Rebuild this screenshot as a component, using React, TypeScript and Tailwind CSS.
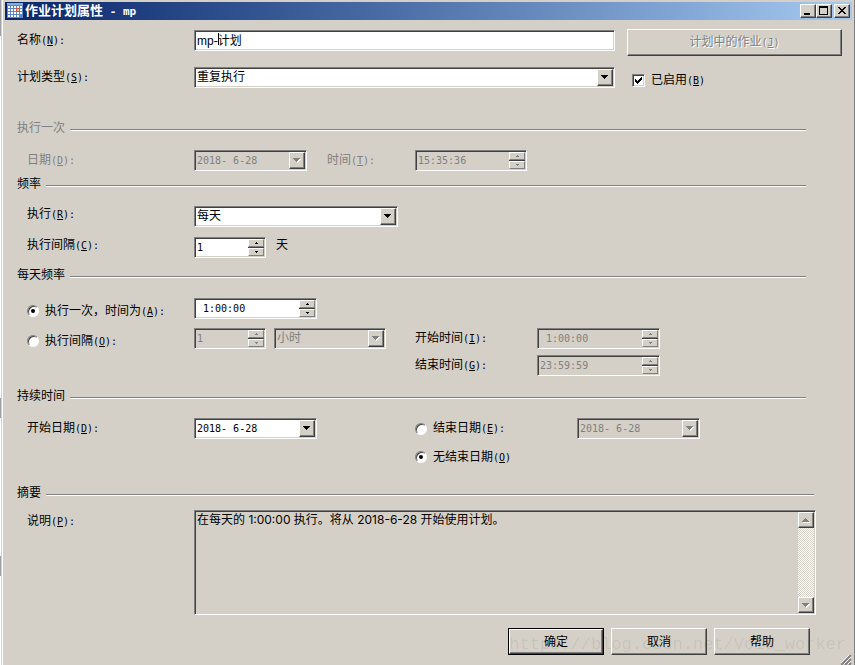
import type { ReactNode } from "react";

const SUNKEN =
  "border border-t-[#808080] border-l-[#808080] border-r-white border-b-white shadow-[inset_1px_1px_#404040,inset_-1px_-1px_#d4d0c8]";
const RAISED =
  "border border-t-white border-l-white border-r-[#404040] border-b-[#404040] bg-[#d4d0c8] shadow-[inset_-1px_-1px_#808080]";
const MONO = "font-['DejaVu_Sans_Mono','Noto_Sans_CJK_SC',monospace] text-[10px]";

function Arrow({ up, disabled }: { up?: boolean; disabled?: boolean }) {
  const d = up ? "M3 0h1v1h1v1h1v1h1v1H0V3h1V2h1V1h1z" : "M0 0h7v1H6v1H5v1H4v1H3V3H2V2H1V1H0z";
  return (
    <svg width="8" height="5" viewBox="0 0 8 5" shapeRendering="crispEdges">
      {disabled && <path d={d} fill="#fff" transform="translate(1 1)" />}
      <path d={d} fill={disabled ? "#808080" : "#000"} />
    </svg>
  );
}

function SmallArrow({ up, disabled }: { up?: boolean; disabled?: boolean }) {
  return (
    <svg width="3" height="2" viewBox="0 0 3 2" shapeRendering="crispEdges">
      <path d={up ? "M1 0h1v1h1v1H0V1h1z" : "M0 0h3v1H2v1H1V1H0z"} fill={disabled ? "#808080" : "#000"} />
    </svg>
  );
}

function Caption({ text, hotkey, colon = true }: { text: string; hotkey: string; colon?: boolean }) {
  return (
    <span className="whitespace-nowrap">
      {text}
      <span className={MONO}>
        (<u className="underline-offset-1">{hotkey}</u>){colon && ":"}
      </span>
    </span>
  );
}

function Section({ title, disabled, wide }: { title: string; disabled?: boolean; wide?: boolean }) {
  return (
    <div className={`flex h-4 items-center gap-[5px] pl-[14px] ${wide ? "pr-10" : "pr-12"}`}>
      <h2 className={disabled ? "text-[#808080]" : ""}>{title}</h2>
      <div className="mt-[3px] h-[2px] flex-1 border-t border-b border-t-[#808080] border-b-white" />
    </div>
  );
}

function Row({ children, className = "items-center" }: { children: ReactNode; className?: string }) {
  return <div className={`grid grid-cols-[167px_221px_1fr] pl-6 ${className}`}>{children}</div>;
}

type FieldProps = {
  id: string;
  value: string;
  disabled?: boolean;
  className?: string;
  label?: string;
};

function SelectBox({ id, value, disabled, className = "", label }: FieldProps) {
  return (
    <div className={`relative ${className}`}>
      <select
        id={id}
        aria-label={label}
        disabled={disabled}
        className={`block h-[21px] w-full appearance-none pl-[2px] leading-[17px] disabled:text-[#808080] disabled:opacity-100 ${
          disabled ? "bg-[#d4d0c8]" : "bg-white"
        } ${SUNKEN}`}
      >
        <option>{value}</option>
      </select>
      <span
        className={`pointer-events-none absolute top-[2px] right-[2px] bottom-[2px] flex w-4 items-center justify-center ${RAISED}`}
      >
        <Arrow disabled={disabled} />
      </span>
    </div>
  );
}

function DateBox({ id, value, disabled, className = "", label }: FieldProps) {
  return (
    <div className={`flex h-[21px] p-px ${disabled ? "" : "bg-white"} ${SUNKEN} ${className}`}>
      <input
        id={id}
        aria-label={label}
        defaultValue={value}
        disabled={disabled}
        className={`min-w-0 flex-1 pl-px disabled:text-[#808080] ${MONO}`}
      />
      <button
        type="button"
        aria-label="选择日期"
        disabled={disabled}
        className={`flex w-4 items-center justify-center ${RAISED}`}
      >
        <Arrow disabled={disabled} />
      </button>
    </div>
  );
}

function SpinBox({ id, value, disabled, className = "", label }: FieldProps) {
  return (
    <div className={`flex h-[21px] p-px ${disabled ? "" : "bg-white"} ${SUNKEN} ${className}`}>
      <input
        id={id}
        aria-label={label}
        defaultValue={value}
        disabled={disabled}
        className={`min-w-0 flex-1 pl-px disabled:text-[#808080] ${MONO}`}
      />
      <div className="flex w-4 flex-col gap-px bg-[#404040]">
        {[true, false].map((up) => (
          <button
            key={String(up)}
            type="button"
            aria-label={up ? "增加" : "减少"}
            disabled={disabled}
            className="flex flex-1 items-center justify-center border border-t-white border-r-[#808080] border-b-[#808080] border-l-white bg-[#d4d0c8]"
          >
            <SmallArrow up={up} disabled={disabled} />
          </button>
        ))}
      </div>
    </div>
  );
}

function Radio({
  name,
  text,
  hotkey,
  checked,
  colon,
}: {
  name: string;
  text: string;
  hotkey: string;
  checked?: boolean;
  colon?: boolean;
}) {
  return (
    <label className="flex h-4 items-center gap-[6px]">
      <input
        type="radio"
        name={name}
        defaultChecked={checked}
        className="flex size-3 appearance-none items-center justify-center rounded-full border border-t-[#808080] border-r-white border-b-white border-l-[#808080] bg-white shadow-[inset_1px_1px_#404040] checked:before:size-1 checked:before:rounded-full checked:before:bg-black"
      />
      <Caption text={text} hotkey={hotkey} colon={colon} />
    </label>
  );
}

function TitleBar() {
  return (
    <header className="mr-[2px] ml-[2px] flex h-[18px] items-center bg-linear-to-r from-[#0a246a] to-[#a6caf0] pr-[2px] pl-[2px]">
      <svg width="16" height="16" viewBox="0 0 16 16" shapeRendering="crispEdges">
        <path d="M0 0h16v15H0z" fill="#5b87c5" />
        <path d="M0 0h16v2H0z" fill="#84aee0" />
        <path
          d="M1 3h2v2H1zM4 3h2v2H4zM7 3h2v2H7zM10 3h2v2h-2zM13 3h2v2h-2zM1 6h2v2H1zM4 6h2v2H4zM7 6h2v2H7zM13 6h2v2h-2zM1 9h2v2H1zM4 9h2v2H4zM7 9h2v2H7zM10 9h2v2h-2zM13 9h2v2h-2zM1 12h2v2H1zM4 12h2v2H4zM7 12h2v2H7zM10 12h2v2h-2z"
          fill="#fff"
        />
        <path d="M9 5h4v4H9z" fill="#e0522c" />
        <path d="M10 6h2v2h-2z" fill="#f9c9a8" />
      </svg>
      <h1 className="ml-[2px] flex-1 text-[13px] leading-[18px] font-bold whitespace-pre text-white">
        作业计划属性
        <span className="font-['DejaVu_Sans_Mono',monospace] text-[11px]"> - mp</span>
      </h1>
      <button type="button" aria-label="最小化" className={`h-[14px] w-4 ${RAISED}`}>
        <svg width="14" height="12" viewBox="0 0 14 12" shapeRendering="crispEdges">
          <path d="M3 8h6v2H3z" />
        </svg>
      </button>
      <button type="button" aria-label="最大化" className={`h-[14px] w-4 ${RAISED}`}>
        <svg width="14" height="12" viewBox="0 0 14 12" shapeRendering="crispEdges">
          <path d="M2 1h9v9H2zM3 3v6h7V3z" fillRule="evenodd" />
        </svg>
      </button>
      <button type="button" aria-label="关闭" className={`ml-[2px] h-[14px] w-4 ${RAISED}`}>
        <svg width="14" height="12" viewBox="0 0 14 12" shapeRendering="crispEdges">
          <path d="M3 2h2v1h1v1h2V3h1V2h2v1h-1v1H9v1H8v1h1v1h1v1h1v1H9V8H8V7H6v1H5v1H3V8h1V7h1V6h1V5H5V4H4V3H3z" />
        </svg>
      </button>
    </header>
  );
}

export default function App() {
  return (
    <div className="relative min-h-screen border-l border-l-white bg-[#d4d0c8] pl-px font-['Liberation_Sans','Noto_Sans_CJK_SC',sans-serif] text-[12px] leading-4 text-black">
      {/* Edge of the window behind */}
      <span className="absolute top-0 -left-px h-9 w-px bg-[#a0a0a0]" />
      <span className="absolute top-[398px] -left-px h-5 w-px bg-[#a0a0a0]" />
      <span className="absolute top-[556px] -left-px h-5 w-px bg-[#a0a0a0]" />

      <form className="relative min-h-screen border-r border-l border-r-[#808080] border-l-white pt-[2px]">
        <TitleBar />

        {/* Name and type */}
        <div className="flex gap-3 pr-3 pl-[14px]">
          <div className="grid min-w-0 flex-1 grid-cols-[177px_1fr] items-center gap-y-4 self-start pt-[10px]">
            <label htmlFor="name">
              <Caption text="名称" hotkey="N" />
            </label>
            <div className="relative">
              <input
                id="name"
                defaultValue="mp-计划"
                className={`block h-[21px] w-full bg-white pb-[3px] pl-[2px] ${SUNKEN}`}
              />
              <span className="absolute top-[3px] left-6 h-3 w-px bg-black" />
            </div>
            <label htmlFor="type">
              <Caption text="计划类型" hotkey="S" />
            </label>
            <SelectBox id="type" value="重复执行" />
          </div>
          <div className="w-[215px] pt-[9px]">
            <button
              type="button"
              disabled
              className={`h-[27px] w-full text-[#808080] [text-shadow:1px_1px_#fff] ${RAISED}`}
            >
              <Caption text="计划中的作业" hotkey="J" colon={false} />
            </button>
            <label className="mt-4 ml-[5px] flex h-4 items-center gap-[6px]">
              <span className="relative flex">
                <input
                  type="checkbox"
                  defaultChecked
                  className={`peer size-[13px] appearance-none bg-white ${SUNKEN}`}
                />
                <svg
                  className="pointer-events-none invisible absolute top-[3px] left-[3px] peer-checked:visible"
                  width="7"
                  height="7"
                  viewBox="0 0 7 7"
                  shapeRendering="crispEdges"
                >
                  <path d="M0 2h1v1h1v1h1V3h1V2h1V1h1V0h1v3H6v1H5v1H4v1H3v1H2V6H1V5H0z" />
                </svg>
              </span>
              <Caption text="已启用" hotkey="B" colon={false} />
            </label>
          </div>
        </div>

        {/* One time */}
        <div className="mt-8">
          <Section title="执行一次" disabled />
        </div>
        <Row className="mt-[14px] items-center text-[#808080]">
          <label htmlFor="once-date">
            <Caption text="日期" hotkey="D" />
          </label>
          <div className="flex items-center">
            <DateBox id="once-date" value="2018- 6-28" disabled className="w-[113px]" />
            <label htmlFor="once-time" className="ml-5">
              <Caption text="时间" hotkey="T" />
            </label>
          </div>
          <SpinBox id="once-time" value="15:35:36" disabled className="w-28" />
        </Row>

        {/* Frequency */}
        <div className="mt-[5px]">
          <Section title="频率" />
        </div>
        <Row className="mt-[14px] items-start">
          <label htmlFor="occurs">
            <Caption text="执行" hotkey="R" />
          </label>
          <SelectBox id="occurs" value="每天" className="w-[204px]" />
        </Row>
        <Row className="mt-[10px] items-start">
          <label htmlFor="every">
            <Caption text="执行间隔" hotkey="C" />
          </label>
          <div className="flex items-start gap-[10px]">
            <SpinBox id="every" value="1" className="w-[72px]" />
            <span>天</span>
          </div>
        </Row>

        {/* Daily frequency */}
        <div className="mt-[9px]">
          <Section title="每天频率" />
        </div>
        <Row className="mt-[15px] items-end">
          <Radio name="daily" text="执行一次，时间为" hotkey="A" checked />
          <SpinBox id="daily-time" label="执行时间" value=" 1:00:00" className="w-[123px]" />
        </Row>
        <Row className="mt-[9px] items-end">
          <Radio name="daily" text="执行间隔" hotkey="O" />
          <div className="flex gap-2">
            <SpinBox id="daily-every" label="间隔" value="1" disabled className="w-[72px]" />
            <SelectBox id="daily-unit" label="单位" value="小时" disabled className="w-28" />
          </div>
          <div className="flex items-center">
            <label htmlFor="start-time" className="w-[122px]">
              <Caption text="开始时间" hotkey="I" />
            </label>
            <SpinBox id="start-time" value=" 1:00:00" disabled className="w-[123px]" />
          </div>
        </Row>
        <Row className="mt-[6px] items-center">
          <div className="col-start-3 flex items-center">
            <label htmlFor="end-time" className="w-[122px]">
              <Caption text="结束时间" hotkey="G" />
            </label>
            <SpinBox id="end-time" value="23:59:59" disabled className="w-[123px]" />
          </div>
        </Row>

        {/* Duration */}
        <div className="mt-3">
          <Section title="持续时间" />
        </div>
        <Row className="mt-[14px] items-center">
          <label htmlFor="start-date">
            <Caption text="开始日期" hotkey="D" />
          </label>
          <DateBox id="start-date" value="2018- 6-28" className="w-[123px]" />
          <div className="flex items-center">
            <div className="w-[162px]">
              <Radio name="end" text="结束日期" hotkey="E" />
            </div>
            <DateBox id="end-date" label="结束日期" value="2018- 6-28" disabled className="w-[123px]" />
          </div>
        </Row>
        <Row className="mt-[10px] items-center">
          <div className="col-start-3">
            <Radio name="end" text="无结束日期" hotkey="O" checked colon={false} />
          </div>
        </Row>

        {/* Summary */}
        <div className="mt-5">
          <Section title="摘要" wide />
        </div>
        <div className="mt-[9px] flex items-start pr-[38px] pl-6">
          <label htmlFor="summary" className="mt-[3px] w-[167px]">
            <Caption text="说明" hotkey="P" />
          </label>
          <div className={`flex h-[105px] min-w-0 flex-1 p-px ${SUNKEN}`}>
            <textarea
              id="summary"
              readOnly
              defaultValue="在每天的 1:00:00 执行。将从 2018-6-28 开始使用计划。"
              className="min-w-0 flex-1 resize-none overflow-hidden pl-px font-['Inter','Noto_Sans_CJK_SC',sans-serif]"
            />
            <div className="flex w-4 flex-col bg-[repeating-conic-gradient(#fff_0_25%,#d4d0c8_0_50%)] bg-[length:2px_2px]">
              <button
                type="button"
                aria-label="向上滚动"
                disabled
                className={`flex h-4 items-center justify-center ${RAISED}`}
              >
                <Arrow up disabled />
              </button>
              <div className="flex-1" />
              <button
                type="button"
                aria-label="向下滚动"
                disabled
                className={`flex h-4 items-center justify-center ${RAISED}`}
              >
                <Arrow disabled />
              </button>
            </div>
          </div>
        </div>

        <footer className="flex justify-end gap-[7px] pt-[13px] pr-11 pb-[10px]">
          <button type="submit" className="h-[27px] w-24 border border-black">
            <span className={`flex h-full items-center justify-center ${RAISED}`}>确定</span>
          </button>
          <button type="button" className={`h-[27px] w-24 ${RAISED}`}>
            取消
          </button>
          <button type="button" className={`h-[27px] w-24 ${RAISED}`}>
            帮助
          </button>
        </footer>

        <p className="pointer-events-none absolute right-2 bottom-2 font-['Liberation_Mono',monospace] text-[17px] leading-6 text-black/8">
          https://blog.csdn.net/Void_worker
        </p>
        <svg className="absolute right-[2px] bottom-0" width="11" height="10" viewBox="0 0 11 10">
          <path d="M0 10 10 0M4 10l6-6M8 10l2-2" stroke="#808080" strokeWidth="2" />
          <path d="M-1 9 9-1M3 9l7-7M7 9l3-3" stroke="#fff" />
        </svg>
      </form>
    </div>
  );
}
